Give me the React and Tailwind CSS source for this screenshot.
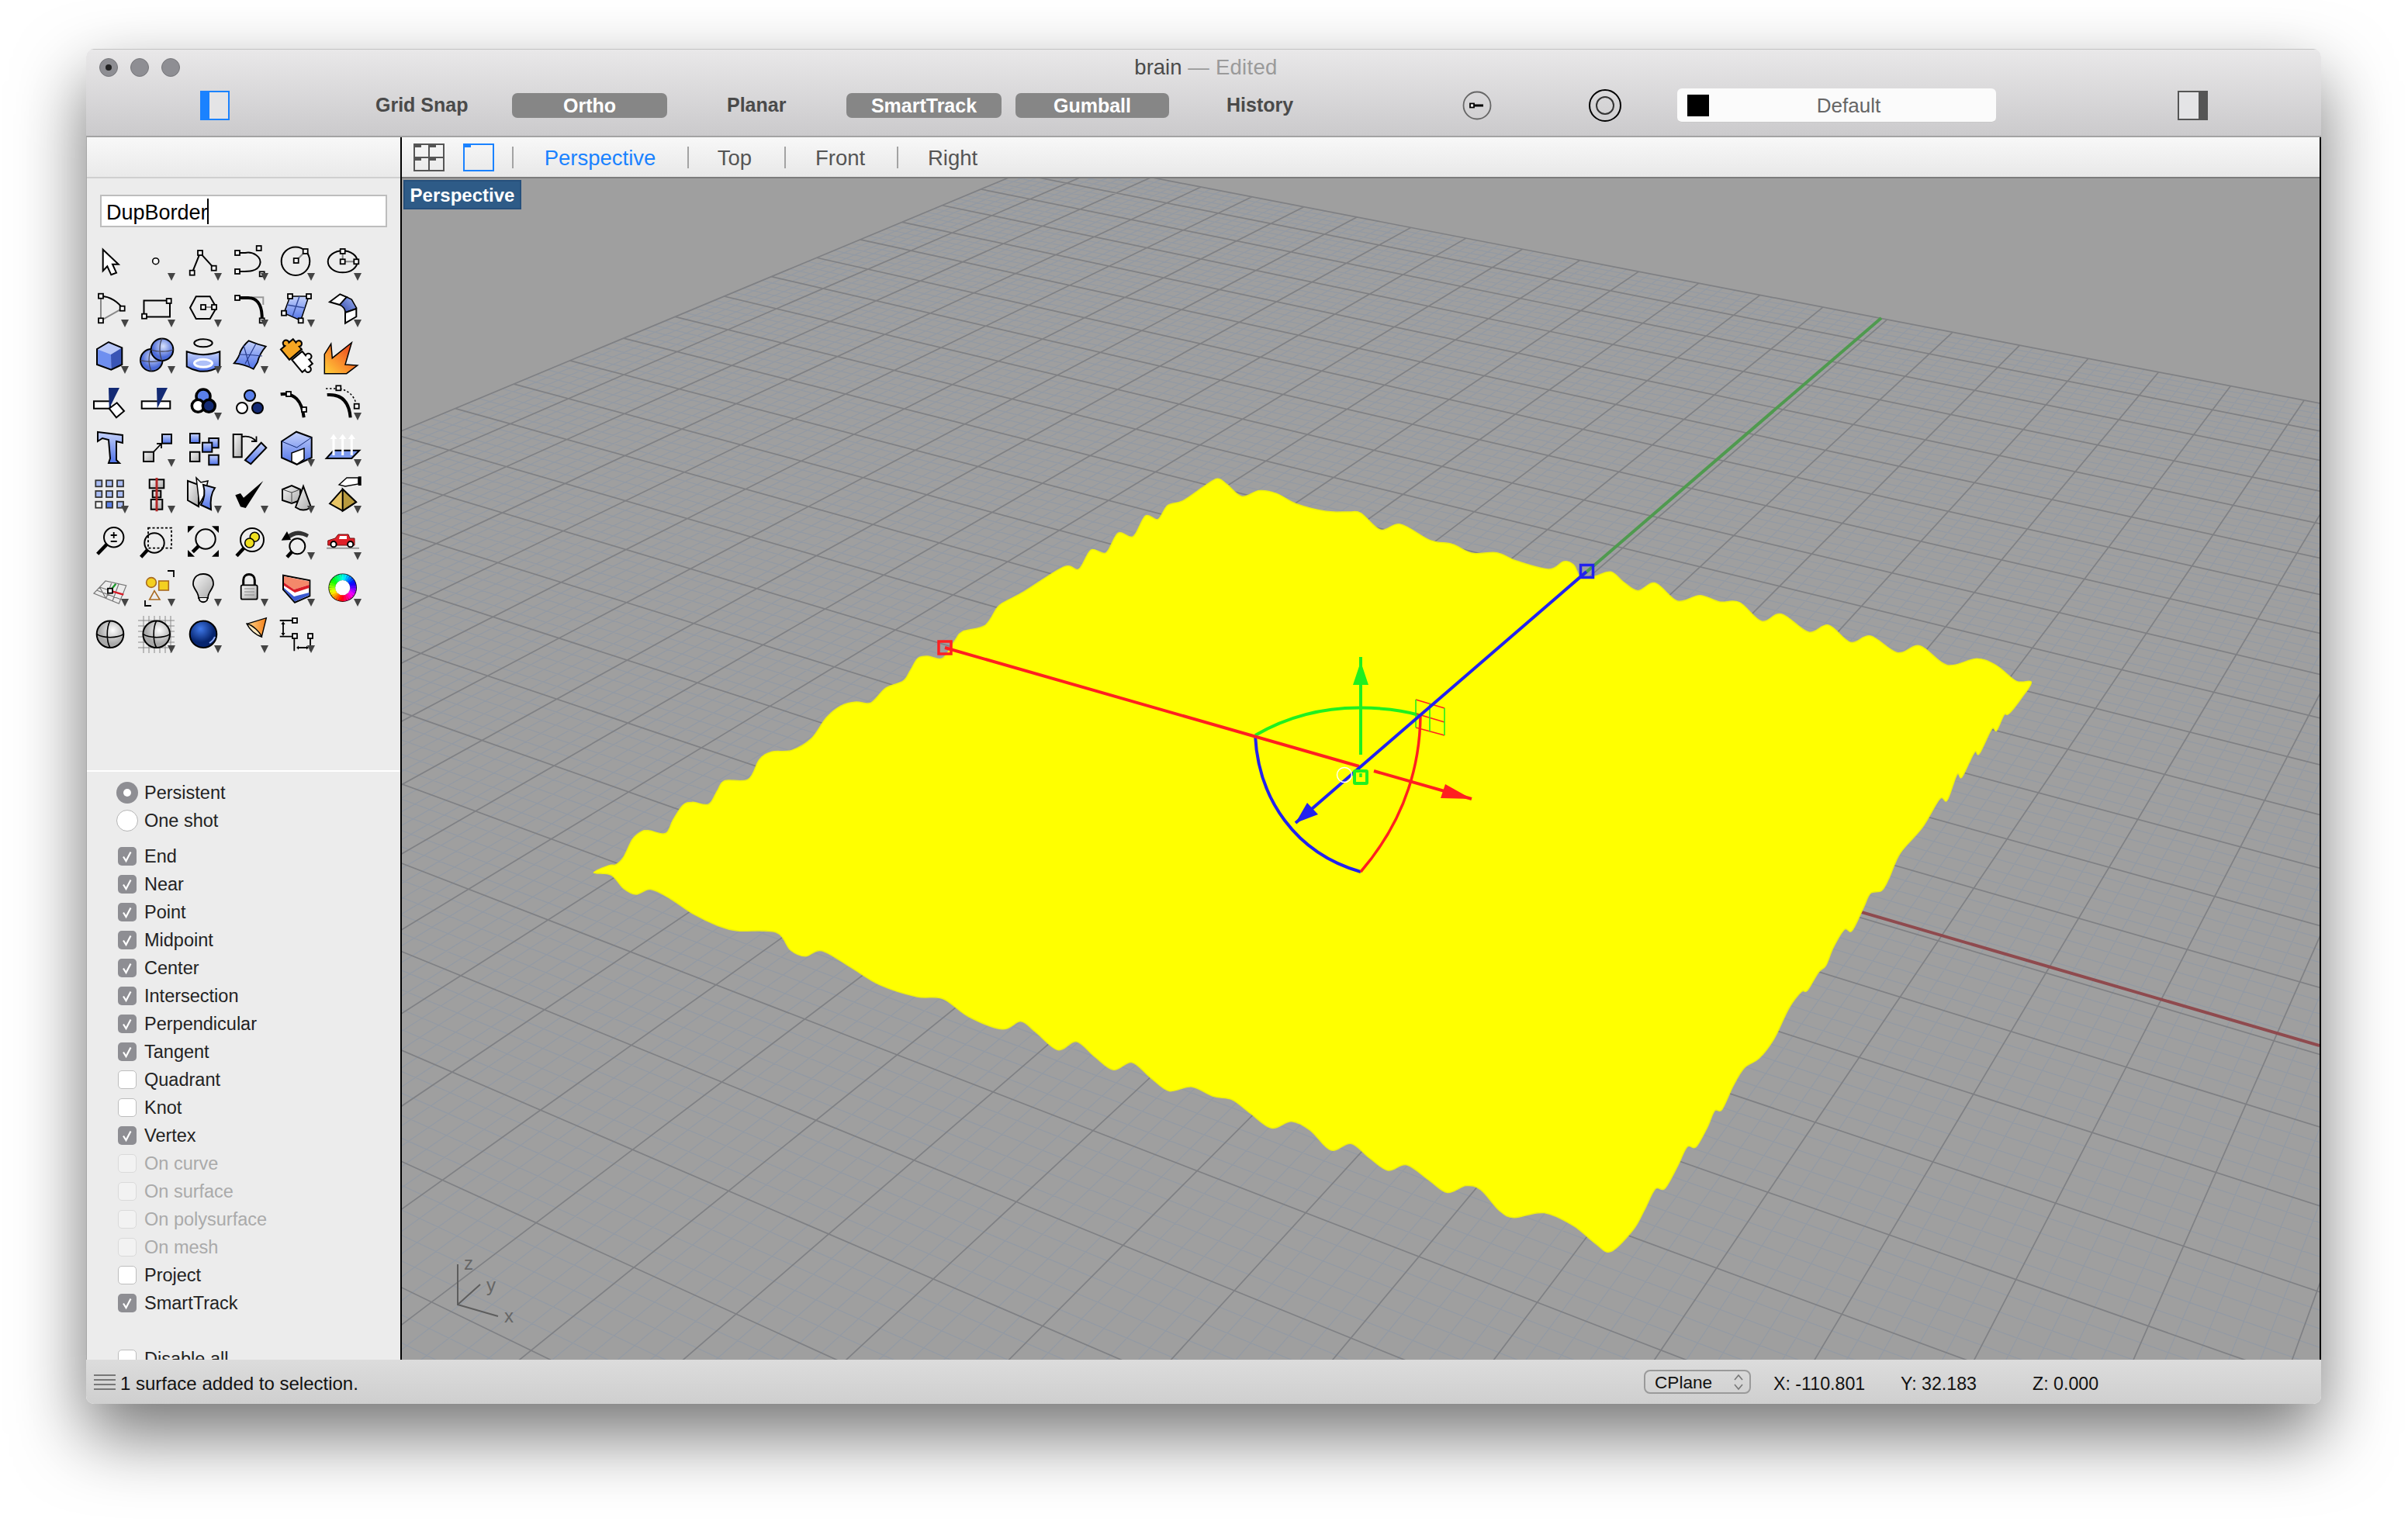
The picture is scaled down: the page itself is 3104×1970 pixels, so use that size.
import React from 'react'

// ---- viewport plane: unit square -> surface corners, in page pixels
const [L, B, R, T] = [[765, 1125], [2076, 1613], [2618, 879], [1569, 617]]

const makePlane = () => {
  const dx1 = B[0] - R[0], dx2 = T[0] - R[0], sx = L[0] - B[0] + R[0] - T[0]
  const dy1 = B[1] - R[1], dy2 = T[1] - R[1], sy = L[1] - B[1] + R[1] - T[1]
  const den = dx1 * dy2 - dx2 * dy1
  const g = (sx * dy2 - dx2 * sy) / den
  const h = (dx1 * sy - sx * dy1) / den
  const a = B[0] - L[0] + g * B[0], b = T[0] - L[0] + h * T[0]
  const d = B[1] - L[1] + g * B[1], e = T[1] - L[1] + h * T[1]
  return (u, v) => {
    const w = g * u + h * v + 1
    return [(a * u + b * v + L[0]) / w, (d * u + e * v + L[1]) / w]
  }
}
const plane = makePlane()

const gridPaths = () => {
  const half = 1.435
  const majors = 15
  const minorPer = 5
  const total = majors * minorPer
  let minor = ''
  let major = ''
  for (let i = -total; i <= total; i++) {
    const t = 0.5 + (half * i) / total
    const a1 = plane(0.5 - half, t), a2 = plane(0.5 + half, t)
    const b1 = plane(t, 0.5 - half), b2 = plane(t, 0.5 + half)
    const seg = `M${a1[0]} ${a1[1]}L${a2[0]} ${a2[1]}M${b1[0]} ${b1[1]}L${b2[0]} ${b2[1]}`
    if (i % minorPer === 0) major += seg
    else minor += seg
  }
  return { minor, major }
}
const grid = gridPaths()

// surface outline, traced from crops of the shot
const crop = (ox, oy, sx, sy, pts) => pts.map(([x, y]) => [ox + x / sx, oy + y / sy])
const outline = [
  ...crop(740, 600, 1.568, 2.613, [
    [40, 1372], [70, 1348], [85, 1345], [100, 1320], [118, 1260], [135, 1235], [150, 1230], [185, 1240], [200, 1195], [220, 1145], [240, 1135], [272, 1142],
    [290, 1095], [305, 1062], [352, 1058], [375, 990], [400, 965], [440, 960], [480, 920], [510, 850], [540, 810], [570, 797], [600, 800], [630, 750], [665, 727],
    [680, 690], [695, 650], [715, 643], [745, 650], [770, 590], [785, 560], [830, 540], [855, 480], [870, 460], [910, 425], [990, 342], [1020, 350], [1045, 285],
    [1075, 295], [1100, 228], [1130, 240], [1155, 170], [1180, 182], [1200, 135], [1230, 120], [1270, 75], [1300, 45], [1320, 65], [1350, 105], [1385, 85], [1420, 95], [1460, 130], [1520, 155],
  ]),
  ...crop(1700, 600, 1.568, 3, [
    [60, 180], [85, 185], [125, 250], [165, 228], [225, 290], [270, 305], [310, 340], [360, 338], [400, 370], [465, 402], [495, 372], [515, 385], [530, 435], [556, 430], [590, 412], [615, 450], [645, 485],
    [680, 455], [725, 525], [770, 503], [810, 528], [850, 530], [895, 603], [935, 575], [990, 645], [1030, 618], [1075, 685], [1115, 660], [1170, 725], [1215, 698], [1270, 773], [1330, 748], [1370, 775], [1410, 835], [1440, 838],
    [1420, 900], [1395, 960], [1385, 965], [1370, 1025], [1360, 1020], [1335, 1115], [1325, 1110], [1300, 1205], [1290, 1195], [1270, 1295], [1255, 1290], [1220, 1400],
  ]),
  ...crop(1000, 1100, 1.0453, 2.8, [
    [1515, 0], [1500, 90], [1490, 135], [1475, 145], [1465, 200], [1450, 280], [1440, 275], [1425, 340], [1415, 405], [1405, 430], [1390, 495], [1382, 500], [1365, 560], [1345, 670], [1325, 740], [1305, 775],
    [1290, 840], [1275, 925], [1265, 930], [1255, 990], [1240, 1060], [1228, 1060], [1215, 1130], [1198, 1210], [1185, 1212], [1170, 1290], [1155, 1360], [1125, 1438], [1105, 1410], [1075, 1345], [1035, 1298],
    [995, 1315], [975, 1290], [950, 1215], [930, 1200], [905, 1225], [880, 1180], [850, 1125], [825, 1145], [800, 1100], [775, 1048], [748, 1072], [720, 1000], [695, 968], [668, 992], [640, 940], [615, 890],
    [590, 878], [560, 843], [530, 858], [505, 810], [480, 755], [455, 782], [430, 735], [405, 680], [380, 710], [350, 645], [330, 607], [305, 635], [260, 590], [225, 525], [190, 518], [140, 475], [100, 410],
    [62, 352], [40, 372], [20, 350], [0, 285],
  ]),
  ...crop(740, 600, 1.568, 2.613, [[330, 1568], [290, 1550], [240, 1510], [195, 1460], [155, 1428], [125, 1445], [100, 1425], [75, 1380]]),
]

// catmull-rom through the traced points, so the ripples keep their height
const smoothPath = (pts) => {
  const n = pts.length
  let d = `M${pts[0][0]} ${pts[0][1]}`
  for (let i = 0; i < n; i++) {
    const p0 = pts[(i - 1 + n) % n], p1 = pts[i], p2 = pts[(i + 1) % n], p3 = pts[(i + 2) % n]
    d += `C${p1[0] + (p2[0] - p0[0]) / 6} ${p1[1] + (p2[1] - p0[1]) / 6} ${p2[0] - (p3[0] - p1[0]) / 6} ${p2[1] - (p3[1] - p1[1]) / 6} ${p2[0]} ${p2[1]}`
  }
  return d + 'Z'
}

// ---- tool palette helpers
const N = ({ x, y, s = 6 }) => <rect x={x - s / 2} y={y - s / 2} width={s} height={s} fill="white" stroke="black" strokeWidth="1.8" />
const S = ({ x, y, w, h, f = 'url(#blu)' }) => <rect x={x} y={y} width={w} height={h} fill={f} stroke="black" strokeWidth="2" />
const Loupe = ({ cx, cy, r = 12.7, hx, hy, fill = '#eee' }) => (
  <>
    <line x1={cx - r * 0.7} y1={cy + r * 0.7} x2={hx} y2={hy} stroke="black" strokeWidth="4.5" />
    <circle cx={cx} cy={cy} r={r} fill={fill} stroke="black" strokeWidth="2" />
  </>
)
const puzzle = 'M-9 -7H-3a3.4 3.4 0 1 1 6 0H9V-2a3.4 3.4 0 1 1 0 6V8H-9Z'

const wheel = Array.from({ length: 30 }, (_, i) => {
  const a0 = (i / 30) * Math.PI * 2
  const a1 = ((i + 1.2) / 30) * Math.PI * 2
  const r = 13.6
  return (
    <path
      key={i}
      d={`M${29.7 + r * Math.cos(a0)} ${30.7 + r * Math.sin(a0)}L${29.7 + r * Math.cos(a1)} ${30.7 + r * Math.sin(a1)}`}
      stroke={`hsl(${i * 12 + 270}, 100%, 50%)`}
      strokeWidth="8"
    />
  )
})

const tools = [
  // row 0
  [0, <path d="M20.7 14.7L40.7 33.7H33L38 44.7L31.3 47.3L26.3 36.3L20.7 42.3Z" fill="white" stroke="black" strokeWidth="2" />],
  [1, <circle cx="28.7" cy="29.7" r="4" fill="white" stroke="black" strokeWidth="1.6" />],
  [1, <><path d="M15.7 44.7L26 19L43.7 38.7" fill="none" stroke="black" strokeWidth="2" /><N x={26} y={19} /><N x={15.7} y={44.7} /><N x={43.7} y={38.7} /></>],
  [1, <><path d="M14 19H24C34 17 46 24 43 34C40 44 26 43 14 43" fill="none" stroke="black" strokeWidth="2" /><N x={14} y={19} /><N x={41.7} y={13} /><N x={14} y={43} /><N x={45.7} y={46.3} /></>],
  [1, <><circle cx="29" cy="29.7" r="18.3" fill="none" stroke="black" strokeWidth="2" /><line x1="29.7" y1="29" x2="41.7" y2="17" stroke="#888" strokeWidth="2" /><N x={29.7} y={29} /><N x={41.7} y={17} /></>],
  [1, <><ellipse cx="29.7" cy="30.3" rx="19" ry="14" fill="none" stroke="black" strokeWidth="2" /><path d="M29.7 17V30.3H47.3" fill="none" stroke="#888" strokeWidth="2" /><N x={29.7} y={17} /><N x={29.7} y={30.3} /><N x={47.3} y={30.3} /></>],
  // row 1
  [1, <><path d="M18 14.7C30 15 41 23 45.7 30.7" fill="none" stroke="black" strokeWidth="2" /><path d="M18 14.7V46.3L45.7 30.7" fill="none" stroke="#888" strokeWidth="2" /><N x={18} y={14.7} /><N x={45.7} y={30.7} /><N x={18} y={46.3} /></>],
  [1, <><rect x="13.5" y="20.5" width="33.5" height="21" fill="none" stroke="black" strokeWidth="2" /><N x={45.7} y={21} /><N x={14} y={40.7} /></>],
  [1, <><path d="M13 29.7L20.7 15.3H38.7L47 29.7L38.7 44H20.7Z" fill="none" stroke="black" strokeWidth="2" /><line x1="30" y1="29" x2="44" y2="29" stroke="#888" strokeWidth="2" /><N x={30} y={29} /><N x={44} y={29} /></>],
  [1, <><path d="M32 16.3H47.3V26" fill="none" stroke="#999" strokeWidth="2" /><path d="M14 17H28C38 17 45 24 45.7 40V46" fill="none" stroke="black" strokeWidth="4" /><N x={14} y={17} /><N x={45.7} y={46.3} /></>],
  [1, <><path d="M22 15H46L35.7 46.3L14 36.7Z" fill="url(#blu)" stroke="black" strokeWidth="1.5" /><path d="M34 15L25 41M18 26L41 30" stroke="#334a9a" strokeWidth="1.5" /><N x={22} y={15} /><N x={46} y={15} /><N x={35.7} y={46.3} /><N x={14} y={36.7} /></>],
  [1, <><path d="M13 22.3L26.3 12.3L35 16L26 26Z" fill="white" stroke="black" strokeWidth="2" /><path d="M26 26L35 16L41.3 19L47.3 29.7V31L33 36C33 32 30 28 26 26Z" fill="url(#blu2)" stroke="black" strokeWidth="1.6" /><path d="M33 36L47.3 31V41.3L33 49.7Z" fill="white" stroke="black" strokeWidth="2" /></>],
  // row 2
  [1, <><path d="M13 23L28 14L45.3 21.3L31 30Z" fill="#b9c8f8" /><path d="M13 23L31 30V49.7L13 43Z" fill="#6f8ff0" /><path d="M31 30L45.3 21.3V43L31.3 49.7Z" fill="#3a55b5" /><path d="M13 23L28 14L45.3 21.3V43L31.3 49.7L13 43Z" fill="none" stroke="black" strokeWidth="2" /></>],
  [1, <><circle cx="23.3" cy="37.3" r="14.3" fill="url(#sph)" stroke="black" strokeWidth="2" /><path d="M9 37.3C16 40 30 40 37.6 37.3M23.3 23C19 30 19 44 23.3 51.6" fill="none" stroke="#445" strokeWidth="1.2" /><circle cx="37" cy="23.7" r="14.3" fill="url(#sph)" stroke="black" strokeWidth="2" /><path d="M22.7 23.7C30 27 44 27 51.3 23.7M37 9.4C33 16 33 30 37 38" fill="none" stroke="#445" strokeWidth="1.2" /></>],
  [1, <><ellipse cx="30" cy="15.3" rx="11.7" ry="5" fill="none" stroke="black" strokeWidth="2" /><path d="M8.7 26.3Q30 34 51.3 26.3V45.7Q30 58 8.7 45.7Z" fill="url(#blu)" stroke="black" strokeWidth="2" /><ellipse cx="30" cy="41.3" rx="11.5" ry="5" fill="#aec0f8" stroke="white" strokeWidth="3" /></>],
  [1, <><path d="M9.7 41.3Q16 34 18 26Q22 18 28.7 12.3Q40 17 50.7 19.7Q42 30 40 40L34.7 48.7Q22 42 9.7 41.3Z" fill="url(#blu)" stroke="black" strokeWidth="1.8" /><path d="M22 18L30 46M38 16L24 42M16 30Q30 30 46 32" fill="none" stroke="#263a8a" strokeWidth="1.2" /></>],
  [0, <><path d={puzzle} transform="translate(23 23) rotate(-40) scale(1.15)" fill="#f5a623" stroke="black" strokeWidth="1.8" /><path d={puzzle} transform="translate(38 39) rotate(50) scale(1.15)" fill="white" stroke="black" strokeWidth="1.8" /></>],
  [0, <path d="M6.3 54.7V29.7L14.7 16.3L16.3 34.7L41.3 14.7L33 43L48.7 44L34.7 54.7Z" fill="url(#org)" stroke="black" strokeWidth="1.5" />],
  // row 3
  [0, <><rect x="9" y="30.3" width="21" height="9.4" fill="white" stroke="black" strokeWidth="2" /><path d="M28 13H42L28.7 39.7Z" fill="#132a74" /><path d="M28.7 39.7L38.7 32.3L48 43L38 51.3Z" fill="white" stroke="black" strokeWidth="2" /></>],
  [0, <><rect x="10.7" y="30.3" width="36.6" height="9.4" fill="white" stroke="black" strokeWidth="2" /><path d="M30 13H44L30.7 39.7Z" fill="#132a74" /></>],
  [1, <><circle cx="30" cy="24" r="9" fill="#5a80ea" stroke="black" strokeWidth="3.5" /><circle cx="23.3" cy="36.3" r="8" fill="white" stroke="black" strokeWidth="3.5" /><circle cx="37.3" cy="36.3" r="8" fill="#132a74" stroke="black" strokeWidth="3.5" /></>],
  [0, <><circle cx="30" cy="23" r="7" fill="#5a80ea" stroke="black" strokeWidth="2" /><circle cx="20" cy="39" r="7" fill="white" stroke="black" strokeWidth="2" /><circle cx="40" cy="39" r="7" fill="#132a74" stroke="black" strokeWidth="2" /></>],
  [0, <><path d="M9.7 21.3Q36 18 39.7 51.3" fill="none" stroke="black" strokeWidth="4" /><N x={20} y={21} /><N x={40} y={41} /></>],
  [1, <><path d="M9.7 22Q37 20 39.7 51.3" fill="none" stroke="black" strokeWidth="4" /><path d="M8 14H22M26 14Q44 18 47.7 36" fill="none" stroke="black" strokeWidth="1.6" strokeDasharray="2.5 2.5" /><N x={24.3} y={13.3} /><N x={47.7} y={36.7} /></>],
  // row 4
  [0, <path d="M14 10L46 14V24L38 22V46L42 50H28L30 44L28 20L20 18L14 22Z" fill="url(#blu)" stroke="black" strokeWidth="2" />],
  [1, <><S x={13} y={35.7} w={13} h={12.3} f="url(#wht)" /><S x={37} y={13} w={12} h={11.7} /><path d="M26 35.7L36 25M30 25H36V31" fill="none" stroke="black" strokeWidth="1.8" /></>],
  [0, <><S x={13} y={12} w={12.3} h={12} /><S x={37.3} y={18} w={12.4} h={12.3} /><S x={29} y={23.7} w={12.3} h={12} /><S x={13} y={35.7} w={12.3} h={12.3} f="url(#wht)" /><S x={37.3} y={39.7} w={12.4} h={12.6} /></>],
  [0, <><S x={8.7} y={13} w={11} h={29.3} f="url(#wht)" /><path d="M24 46.3L44.7 23.7L51.3 30.3L31.3 51.3Z" fill="url(#blu)" stroke="black" strokeWidth="2" /><path d="M20 16Q32 14 38 22M32 22H38.5V15.5" fill="none" stroke="black" strokeWidth="1.8" /></>],
  [1, <><path d="M11 22L30 9.7L49.7 17V43L30.7 52L11 43Z" fill="url(#blu)" stroke="black" strokeWidth="2" /><path d="M11 22L30.7 30L49.7 17" fill="none" stroke="#132a74" strokeWidth="1" /><path d="M24 37L40 31V45L30.7 51.5L24 48Z" fill="white" stroke="black" strokeWidth="1.5" /></>],
  [1, <><path d="M8.7 44L18 33.7H51.3L41.3 44Z" fill="#7a98ee" stroke="black" strokeWidth="2" /><path d="M18 40V15M29.7 40V15M41.3 40V15" stroke="white" strokeWidth="3" /><path d="M13.5 19L18 12.5L22.5 19ZM25 19L29.7 12.5L34.5 19ZM36.8 19L41.3 12.5L46 19Z" fill="white" /></>],
  // row 5
  [1, <g stroke="#333" strokeWidth="1.8">{[16.3, 30, 43.7].flatMap((y, r) => [15.3, 29, 43].map((x, c) => (
    <rect key={`${r}${c}`} x={x - 4} y={y - 4} width="8" height="8" fill={r === 2 && c === 0 ? '#f4f4f4' : r === 2 && c === 1 ? '#5b7fe8' : '#a9bcf5'} />
  )))}</g>],
  [1, <><S x={20.7} y={11.3} w={18.6} h={11} f="url(#wht)" /><S x={24.7} y={25.7} w={10.6} h={8.6} f="url(#wht)" /><S x={22.7} y={37} w={14.6} h={12.7} f="url(#wht)" /><line x1="30" y1="9" x2="30" y2="52.3" stroke="#b42828" strokeWidth="3" /></>],
  [1, <><path d="M10 13L24 18V46L10 38Z" fill="url(#wht)" stroke="black" strokeWidth="2" /><path d="M21 9L27 15L36 13L32 30L25 43Z" fill="white" stroke="black" strokeWidth="1.5" /><path d="M30 18L45 22Q38 32 40 50L27 44Q34 32 30 18Z" fill="url(#blu)" stroke="black" strokeWidth="2" /></>],
  [1, <path d="M11.3 31.3L18 29L22 34.7L47.3 13L24.7 48L18 46.3Z" fill="black" />],
  [1, <><path d="M12 24L24 19L35 24V38L24 42L12 38Z" fill="url(#wht)" stroke="black" strokeWidth="2" /><path d="M12 24L24 28L35 24M24 28V42" fill="none" stroke="#444" strokeWidth="1" /><path d="M29 47L39 20L49 47Q39 54 29 47Z" fill="url(#wht)" stroke="black" strokeWidth="2" /></>],
  [1, <><path d="M13 42.3L29.7 23.7L47 40.3L29.7 51.7Z" fill="#e8c565" stroke="black" strokeWidth="2" /><path d="M29.7 23.7L47 40.3L29.7 51.7Z" fill="#b89a3e" stroke="black" strokeWidth="2" /><path d="M25 18L35 9H50V17L33 20Z" fill="white" stroke="black" strokeWidth="1.4" /><rect x="49.7" y="7.3" width="4" height="11.7" fill="black" /></>],
  // row 6
  [0, <><Loupe cx={34.7} cy={25.7} hx={13.7} hy={47.3} /><path d="M34.7 19V27M30.7 23H38.7M30.7 31H38.7" stroke="black" strokeWidth="1.8" /></>],
  [0, <><rect x="19" y="13.7" width="30" height="26" fill="none" stroke="black" strokeWidth="1.8" strokeDasharray="3 2.5" /><Loupe cx={27} cy={33} hx={9.7} hy={51.3} fill="none" /></>],
  [0, <><path d="M10 11.3H19L10 20ZM50 11.3H41L50 20ZM10 50.7H19L10 42ZM50 50.7H41L50 42Z" fill="black" /><Loupe cx={33} cy={28} hx={16.3} hy={44.7} /></>],
  [0, <><Loupe cx={33} cy={29} r={15} hx={13} hy={49.7} /><circle cx="36.3" cy="25.3" r="6" fill="#f0e020" stroke="black" strokeWidth="1.6" /><circle cx="29.7" cy="33" r="6" fill="#f0e020" stroke="black" strokeWidth="1.6" /></>],
  [1, <><Loupe cx={31.3} cy={37.3} r={10} hx={18} hy={51.3} /><path d="M17 24Q30 12 46 22L44 26Q30 19 20 29Z" fill="#333" /><path d="M10.7 29.7L18 18L23 29Z" fill="black" /></>],
  [1, <><line x1="9" y1="39.7" x2="51" y2="39.7" stroke="#999" strokeWidth="2" /><path d="M10.7 36V30L20 27L24 22H37L39 27H45V36Z" fill="#e02028" stroke="#701010" strokeWidth="1" /><path d="M26 24H35V28H25Z" fill="white" /><circle cx="18" cy="34.7" r="3.6" fill="white" stroke="black" strokeWidth="2" /><circle cx="39.7" cy="34.7" r="3.6" fill="white" stroke="black" strokeWidth="2" /></>],
  // row 7
  [1, <><path d="M9 38L24 22L50.7 28L41.3 51.3ZM16.5 30L45 39.5M12.7 34L43 45.5M32 23.8L24.7 44.8M41 26L33 48M16.5 30L24.7 44.8" fill="none" stroke="#777" strokeWidth="1.2" /><line x1="30" y1="34.7" x2="37.3" y2="25.7" stroke="#1a9a2a" strokeWidth="2.4" /><line x1="30" y1="34.7" x2="47.3" y2="39.7" stroke="#d81c28" strokeWidth="2.4" /><N x={30} y={34.7} /></>],
  [1, <><circle cx="23" cy="24" r="6.4" fill="#f4d020" stroke="#a86a20" strokeWidth="1.6" /><rect x="32.7" y="22" width="12.6" height="12" fill="#f4d020" stroke="#a86a20" strokeWidth="1.6" /><path d="M27 34.7L34 46H20.7Z" fill="none" stroke="#a86a20" strokeWidth="1.6" /><path d="M44 9H52V17M15 47V54H23" fill="none" stroke="black" strokeWidth="1.8" /></>],
  [1, <><path d="M30 13C21 13 17 19 17 26C17 32 24 36 24 44H36C36 36 43 32 43 26C43 19 39 13 30 13Z" fill="url(#wht)" stroke="black" strokeWidth="1.8" /><path d="M24.5 44C24.5 51 35.5 51 35.5 44" fill="#eee" stroke="black" strokeWidth="1.8" /></>],
  [1, <><path d="M21.7 27V21C21.7 11 36.3 11 36.3 21V27" fill="none" stroke="black" strokeWidth="3" /><rect x="18.7" y="27.3" width="21" height="18.4" rx="2" fill="url(#wht)" stroke="black" strokeWidth="1.8" /><path d="M23 32H36M23 36H36M23 40H36" stroke="#888" strokeWidth="1.2" /></>],
  [1, <><path d="M13 14.7L47.3 21.3V41.3L28 49.7L13 33Z" fill="white" stroke="black" strokeWidth="2" /><path d="M14 16L46.5 22.5V27L27 33L14 24Z" fill="#f4886a" /><path d="M14 24L27 33L46.5 27V31L28 37L14 28Z" fill="#d81c28" /><path d="M14 31L27 42L46.5 37V40.5L28 48.5L14 33Z" fill="#3a5ad0" /></>],
  [1, <><circle cx="29.7" cy="30.7" r="18.3" fill="black" />{wheel}<circle cx="29.7" cy="30.7" r="9.6" fill="white" /></>],
  // row 8
  [0, <><circle cx="30" cy="30.7" r="17.3" fill="url(#gsph)" stroke="black" strokeWidth="2" /><path d="M13 30.7C20 36 40 36 47 30.7M30 13.4C25 22 25 40 30 48" fill="none" stroke="black" strokeWidth="1.6" /></>],
  [1, <><path d="M6 13H53M6 20H53M6 27H53M6 34H53M6 41H53M6 48H53M13 7V55M20 7V55M27 7V55M34 7V55M41 7V55M48 7V55" stroke="#888" strokeWidth="1" fill="none" /><circle cx="29.7" cy="30.7" r="17.3" fill="url(#gsph)" stroke="black" strokeWidth="2" /><path d="M12.7 30.7C20 36 40 36 47 30.7M29.7 13.4C25 22 25 40 29.7 48" fill="none" stroke="black" strokeWidth="1.6" /></>],
  [1, <><circle cx="30" cy="30.7" r="17.3" fill="url(#dsph)" stroke="black" strokeWidth="2" /><path d="M38 42Q43 39 45 34" stroke="#9ab4f8" strokeWidth="2" fill="none" /></>],
  [1, <><path d="M26.3 17.3L51.3 9.7L45.3 34Z" fill="url(#org2)" stroke="black" strokeWidth="1.4" /><path d="M26.3 17.3C29 24 38 32 45.3 34C43 28 34 19 26.3 17.3Z" fill="#fbe8c0" stroke="black" strokeWidth="1.4" /></>],
  [1, <><path d="M8.7 13H28M8.7 33.7H28M27.3 33V52.3M48 33V52M13 17V30M31 48H45" stroke="black" strokeWidth="1.8" fill="none" /><path d="M10.5 18L13 14L15.5 18ZM10.5 29L13 33L15.5 29ZM33 45.5L30 48L33 50.5ZM43 45.5L46 48L43 50.5Z" fill="black" /><N x={28} y={13} /><N x={28} y={33} /><N x={48} y={33} /></>],
]

const Tool = ({ arrow, art }) => (
  <svg viewBox="0 0 60 60" className="w-[60px] h-[60px] block">
    {art}
    {arrow ? <path d="M44 45H54L49 55Z" fill="#444" /> : null}
  </svg>
)

const Check = () => (
  <svg viewBox="0 0 24 24" className="w-[24px] h-[24px] block">
    <path d="M7 12.5L10.5 18L16.5 6.5" fill="none" stroke="white" strokeWidth="2.2" />
  </svg>
)

const Radio = ({ on, label }) => (
  <div className="flex items-center h-[36px]">
    <div className="ml-[38px] w-[36px]">
      {on ? (
        <div className="w-[28px] h-[28px] rounded-full bg-[#8e8e93] flex items-center justify-center">
          <div className="w-[10px] h-[10px] rounded-full bg-white" />
        </div>
      ) : (
        <div className="w-[28px] h-[28px] rounded-full bg-white border border-[#b5b5b5]" />
      )}
    </div>
    <span className="pt-[1px] text-[23.5px] text-[#222]">{label}</span>
  </div>
)

const Option = ({ label, on, off }) => (
  <div className="flex items-center h-[36px]">
    <div className="ml-[40px] w-[34px]">
      {on ? (
        <div className="w-[24px] h-[24px] rounded-[5px] bg-[#8e8e93]">
          <Check />
        </div>
      ) : (
        <div className={off ? 'w-[24px] h-[24px] rounded-[5px] bg-[#f2f2f2] border border-[#dadada]' : 'w-[24px] h-[24px] rounded-[5px] bg-white border border-[#bdbdbd]'} />
      )}
    </div>
    <span className={off ? 'pt-[1px] text-[23.5px] text-[#aaaaaa]' : 'pt-[1px] text-[23.5px] text-[#222]'}>{label}</span>
  </div>
)

const ToggleButton = ({ w, ml, children }) => (
  <div className={`${ml} ${w} h-[32px] rounded-[7px] bg-[#868686] text-white font-bold text-[25px] leading-[32px] text-center whitespace-nowrap`}>{children}</div>
)

const ToolbarLabel = ({ w, ml, children }) => (
  <div className={`${ml} ${w} text-[#4a4a4a] font-bold text-[25px] text-center whitespace-nowrap`}>{children}</div>
)

const Sep = ({ ml }) => <div className={`${ml} w-[2px] h-[28px] bg-[#a3a3a3]`} />

const Viewport = () => (
  <div className="relative flex-1 bg-[#9f9f9f] overflow-hidden">
    <svg viewBox="518 230 2472 1523" className="w-full h-full block">
      <path d={grid.minor} stroke="#939aa4" strokeWidth="1.2" fill="none" />
      <path d={grid.major} stroke="#7f8084" strokeWidth="1.7" fill="none" />
      <line x1="1754" y1="988" x2="2425" y2="410" stroke="#4f9a4f" strokeWidth="4" />
      <line x1="1754" y1="988" x2="2990" y2="1348" stroke="#8f4a4e" strokeWidth="4" />
      <path d={smoothPath(outline)} fill="#ffff00" stroke="#eeee10" strokeWidth="1.5" />

      {/* gumball */}
      <path d="M1618 948Q1680 912 1754 912.5Q1800 913 1829 922" fill="none" stroke="#1ff01f" strokeWidth="4" />
      <path d="M1618 948C1622 1030 1670 1100 1754 1124" fill="none" stroke="#2222ee" strokeWidth="4" />
      <path d="M1831 923C1830 1000 1802 1068 1754 1124" fill="none" stroke="#ff2020" strokeWidth="3.5" />
      <g stroke="#ff2020" strokeWidth="1.6"><line x1="1825" y1="902" x2="1862" y2="913" /><line x1="1825" y1="920" x2="1862" y2="931" /><line x1="1825" y1="938" x2="1862" y2="948" /></g>
      <g stroke="#1ff01f" strokeWidth="1.6"><line x1="1825" y1="902" x2="1825" y2="938" /><line x1="1843" y1="907" x2="1843" y2="943" /><line x1="1862" y1="913" x2="1862" y2="948" /></g>
      <line x1="1218" y1="835" x2="1752" y2="988" stroke="#ff2020" strokeWidth="4" />
      <line x1="1771" y1="994" x2="1897" y2="1030" stroke="#ff2020" strokeWidth="4" />
      <path d="M1863 1011L1857 1029L1897 1030Z" fill="#ff2020" />
      <line x1="1754" y1="973" x2="1754" y2="847" stroke="#1ff01f" strokeWidth="4" />
      <path d="M1754 853L1744 883H1764Z" fill="#1ff01f" />
      <line x1="2045" y1="737" x2="1670" y2="1061" stroke="#2222ee" strokeWidth="4" />
      <path d="M1685 1035L1699 1050L1670 1061Z" fill="#2222ee" />
      <circle cx="1733" cy="999" r="9.5" fill="none" stroke="white" strokeWidth="1.5" />
      <rect x="1746" y="994" width="16" height="16" rx="1" fill="#ffff00" stroke="#1ff01f" strokeWidth="4" />
      <line x1="1754" y1="997" x2="1754" y2="1002" stroke="#1ff01f" strokeWidth="3.5" />
      <rect x="1210" y="827" width="16" height="16" fill="none" stroke="#ff2020" strokeWidth="3.5" />
      <rect x="2037.5" y="728.5" width="16" height="16" fill="none" stroke="#2222ee" strokeWidth="3.5" />

      {/* world axes icon */}
      <g stroke="#5d5d5d" strokeWidth="2" fill="none"><path d="M590 1630V1682L642 1697M590 1682L619 1656" /></g>
      <text x="598" y="1637" fontSize="24" fill="#666">z</text>
      <text x="627" y="1665" fontSize="24" fill="#666">y</text>
      <text x="650" y="1705" fontSize="24" fill="#666">x</text>
    </svg>
    <div className="absolute left-[2px] top-[2px] w-[152px] h-[38px] bg-[#2e5b87] border-2 border-[#26507c] text-white font-bold text-[24px] leading-[36px] text-center">Perspective</div>
  </div>
)

export default function App() {
  return (
    <div className="w-[3104px] h-[1970px] bg-white pt-[63px] pl-[111px] overflow-hidden font-['Liberation_Sans',Arial,sans-serif]">
      <svg className="absolute w-0 h-0">
        <defs>
          <linearGradient id="blu" x1="0" y1="0" x2="0" y2="1"><stop offset="0" stopColor="#c6d3fb" /><stop offset="1" stopColor="#4f72e8" /></linearGradient>
          <linearGradient id="blu2" x1="1" y1="0" x2="0" y2="1"><stop offset="0" stopColor="#9fb4f5" /><stop offset="1" stopColor="#2f46a8" /></linearGradient>
          <linearGradient id="wht" x1="0" y1="0" x2="1" y2="1"><stop offset="0" stopColor="#f8f8f8" /><stop offset="1" stopColor="#a9a9a9" /></linearGradient>
          <linearGradient id="org" x1="0" y1="1" x2="1" y2="0"><stop offset="0" stopColor="#ffd23a" /><stop offset="0.5" stopColor="#f9822a" /><stop offset="1" stopColor="#e0301a" /></linearGradient>
          <linearGradient id="org2" x1="0" y1="0" x2="1" y2="0"><stop offset="0" stopColor="#fcd890" /><stop offset="1" stopColor="#f57f17" /></linearGradient>
          <radialGradient id="sph" cx="0.55" cy="0.35"><stop offset="0" stopColor="#d8e2fc" /><stop offset="1" stopColor="#4b6ad8" /></radialGradient>
          <radialGradient id="gsph" cx="0.6" cy="0.35"><stop offset="0" stopColor="#ffffff" /><stop offset="1" stopColor="#a9a9a9" /></radialGradient>
          <radialGradient id="dsph" cx="0.4" cy="0.3"><stop offset="0" stopColor="#3f78e8" /><stop offset="1" stopColor="#06246e" /></radialGradient>
        </defs>
      </svg>

      <div className="w-[2881px] h-[1747px] rounded-[10px] overflow-hidden flex flex-col shadow-[0_40px_90px_rgba(0,0,0,0.55)]">
        {/* title bar */}
        <div className="h-[114px] shrink-0 flex flex-col bg-gradient-to-b from-[#e9e8e9] to-[#cbcacc] border-t border-[#c4c4c4] border-b-2 border-b-[#a3a3a3]">
          <div className="h-[46px] shrink-0 flex items-center">
            <div className="w-[200px] pl-[17px] flex gap-[16px]">
              <div className="w-[24px] h-[24px] rounded-full bg-[#8e8e93] border border-[#76767a] flex items-center justify-center">
                <div className="w-[8px] h-[8px] rounded-full bg-[#222]" />
              </div>
              <div className="w-[24px] h-[24px] rounded-full bg-[#8e8e93] border border-[#76767a]" />
              <div className="w-[24px] h-[24px] rounded-full bg-[#8e8e93] border border-[#76767a]" />
            </div>
            <div className="flex-1 text-center text-[27.5px] whitespace-nowrap text-[#4a4a4a]">
              brain <span className="text-[#9a9a9a] tracking-[0.3px]">— Edited</span>
            </div>
            <div className="w-[194px]" />
          </div>
          <div className="h-[52px] shrink-0 flex items-center">
            <div className="ml-[147px] w-[38px] h-[38px] border-2 border-[#1a82ff] border-l-[12px] bg-[#e4e4e6]" />
            <ToolbarLabel ml="ml-[188px]" w="w-[118px]">Grid Snap</ToolbarLabel>
            <ToggleButton ml="ml-[58px]" w="w-[200px]">Ortho</ToggleButton>
            <ToolbarLabel ml="ml-[77px]" w="w-[76px]">Planar</ToolbarLabel>
            <ToggleButton ml="ml-[78px]" w="w-[200px]">SmartTrack</ToggleButton>
            <ToggleButton ml="ml-[18px]" w="w-[198px]">Gumball</ToggleButton>
            <ToolbarLabel ml="ml-[74px]" w="w-[85px]">History</ToolbarLabel>
            <svg viewBox="0 0 38 38" className="ml-[219px] w-[38px] h-[38px]">
              <circle cx="19" cy="19" r="17.5" fill="none" stroke="#666" strokeWidth="1.8" />
              <rect x="10" y="16.5" width="5" height="5" fill="white" stroke="black" strokeWidth="1.8" />
              <line x1="15" y1="19" x2="27" y2="19" stroke="black" strokeWidth="3" />
            </svg>
            <svg viewBox="0 0 44 44" className="ml-[124px] w-[44px] h-[44px]">
              <circle cx="22" cy="22" r="20" fill="none" stroke="black" strokeWidth="2" />
              <circle cx="22" cy="22" r="11" fill="none" stroke="#333" strokeWidth="2" />
            </svg>
            <div className="ml-[71px] w-[411px] h-[44px] rounded-[6px] bg-[#fbfbfb] border-b border-[#c8c8c8] flex items-center pl-[13px]">
              <div className="w-[28px] h-[28px] bg-black" />
              <div className="flex-1 pt-[2px] pr-[10px] text-center text-[26px] text-[#666]">Default</div>
            </div>
            <div className="ml-[234px] w-[39px] h-[38px] border-2 border-[#555] border-r-[12px] bg-[#e4e4e6]" />
          </div>
        </div>

        {/* middle */}
        <div className="flex-1 flex min-h-0">
          <div className="w-[407px] shrink-0 bg-[#ececec] border-l border-l-[#a8a8a8] border-r-2 border-r-black overflow-hidden">
            <div className="h-[53px] bg-gradient-to-b from-[#f8f8f8] to-[#eaeaea] border-b-2 border-[#cfcfcf]" />
            <div className="mt-[21px] ml-[17px] w-[370px] h-[42px] bg-white border-2 border-[#bdbdbd] flex items-center pl-[6px] text-[27px] text-black">
              <span className="pt-[5px]">DupBorder</span><span className="w-[2px] h-[33px] bg-black ml-[-1px]" />
            </div>
            <div className="mt-[14px] grid grid-cols-[repeat(6,60px)] auto-rows-[60px]">
              {tools.map(([arrow, art], i) => <Tool key={i} arrow={arrow} art={art} />)}
            </div>
            <div className="mt-[146px] h-[2px] bg-white" />
            <div className="mt-[9px]">
              <Radio on label="Persistent" />
              <Radio label="One shot" />
              <div className="mt-[10px]">
                <Option on label="End" />
                <Option on label="Near" />
                <Option on label="Point" />
                <Option on label="Midpoint" />
                <Option on label="Center" />
                <Option on label="Intersection" />
                <Option on label="Perpendicular" />
                <Option on label="Tangent" />
                <Option label="Quadrant" />
                <Option label="Knot" />
                <Option on label="Vertex" />
                <Option off label="On curve" />
                <Option off label="On surface" />
                <Option off label="On polysurface" />
                <Option off label="On mesh" />
                <Option label="Project" />
                <Option on label="SmartTrack" />
              </div>
              <div className="mt-[36px]">
                <Option label="Disable all" />
              </div>
            </div>
          </div>

          <div className="flex-1 min-w-0 flex flex-col border-r-2 border-r-black">
            <div className="h-[53px] shrink-0 flex items-center bg-gradient-to-b from-[#f8f8f8] to-[#e8e8e8] border-b-2 border-[#7c7c7c]">
              <svg viewBox="0 0 40 36" className="ml-[15px] w-[40px] h-[36px]">
                <path d="M1 1H39V35H1ZM20 1V35M1 18H39" fill="none" stroke="#555" strokeWidth="2" />
                <path d="M2 2H10V5H2ZM21 2H29V5H21ZM2 19H10V22H2ZM21 19H29V22H21Z" fill="#555" />
              </svg>
              <svg viewBox="0 0 40 36" className="ml-[24px] w-[40px] h-[36px]">
                <path d="M1 1H39V35H1Z" fill="none" stroke="#1a82ff" strokeWidth="2" />
                <path d="M2 2H10V5H2Z" fill="#1a82ff" />
              </svg>
              <Sep ml="ml-[23px]" />
              <div className="ml-[39px] w-[145px] pt-[3px] text-center text-[27.5px] text-[#1a82ff] whitespace-nowrap">Perspective</div>
              <Sep ml="ml-[40px]" />
              <div className="ml-[36px] w-[46px] pt-[3px] text-center text-[27.5px] text-[#555]">Top</div>
              <Sep ml="ml-[41px]" />
              <div className="ml-[38px] w-[64px] pt-[3px] text-center text-[27.5px] text-[#555]">Front</div>
              <Sep ml="ml-[41px]" />
              <div className="ml-[38px] w-[64px] pt-[3px] text-center text-[27.5px] text-[#555]">Right</div>
            </div>
            <Viewport />
          </div>
        </div>

        {/* status bar */}
        <div className="h-[57px] shrink-0 flex items-center bg-gradient-to-b from-[#dcdcdc] to-[#cfcfcf] text-[#111]">
          <svg viewBox="0 0 28 20" className="ml-[10px] w-[28px] h-[20px]">
            <path d="M0 1H28M0 7H28M0 13H28M0 19H28" stroke="#777" strokeWidth="2" />
          </svg>
          <span className="ml-[6px] pt-[5px] text-[24px]">1 surface added to selection.</span>
          <div className="flex-1" />
          <div className="w-[138px] h-[31px] rounded-[8px] border-2 border-[#9a9a9a] flex items-center pl-[12px] text-[22.6px]">
            <span className="pt-[3px]">CPlane</span>
            <svg viewBox="0 0 14 24" className="ml-auto mr-[7px] w-[14px] h-[24px]">
              <path d="M2 9L7 3L12 9M2 15L7 21L12 15" fill="none" stroke="#777" strokeWidth="1.6" />
            </svg>
          </div>
          <div className="ml-[29px] w-[164px] pt-[5px] text-[23.2px] whitespace-nowrap">X: -110.801</div>
          <div className="w-[170px] pt-[5px] text-[23.2px] whitespace-nowrap">Y: 32.183</div>
          <div className="w-[372px] pt-[5px] text-[23.2px] whitespace-nowrap">Z: 0.000</div>
        </div>
      </div>
    </div>
  )
}
